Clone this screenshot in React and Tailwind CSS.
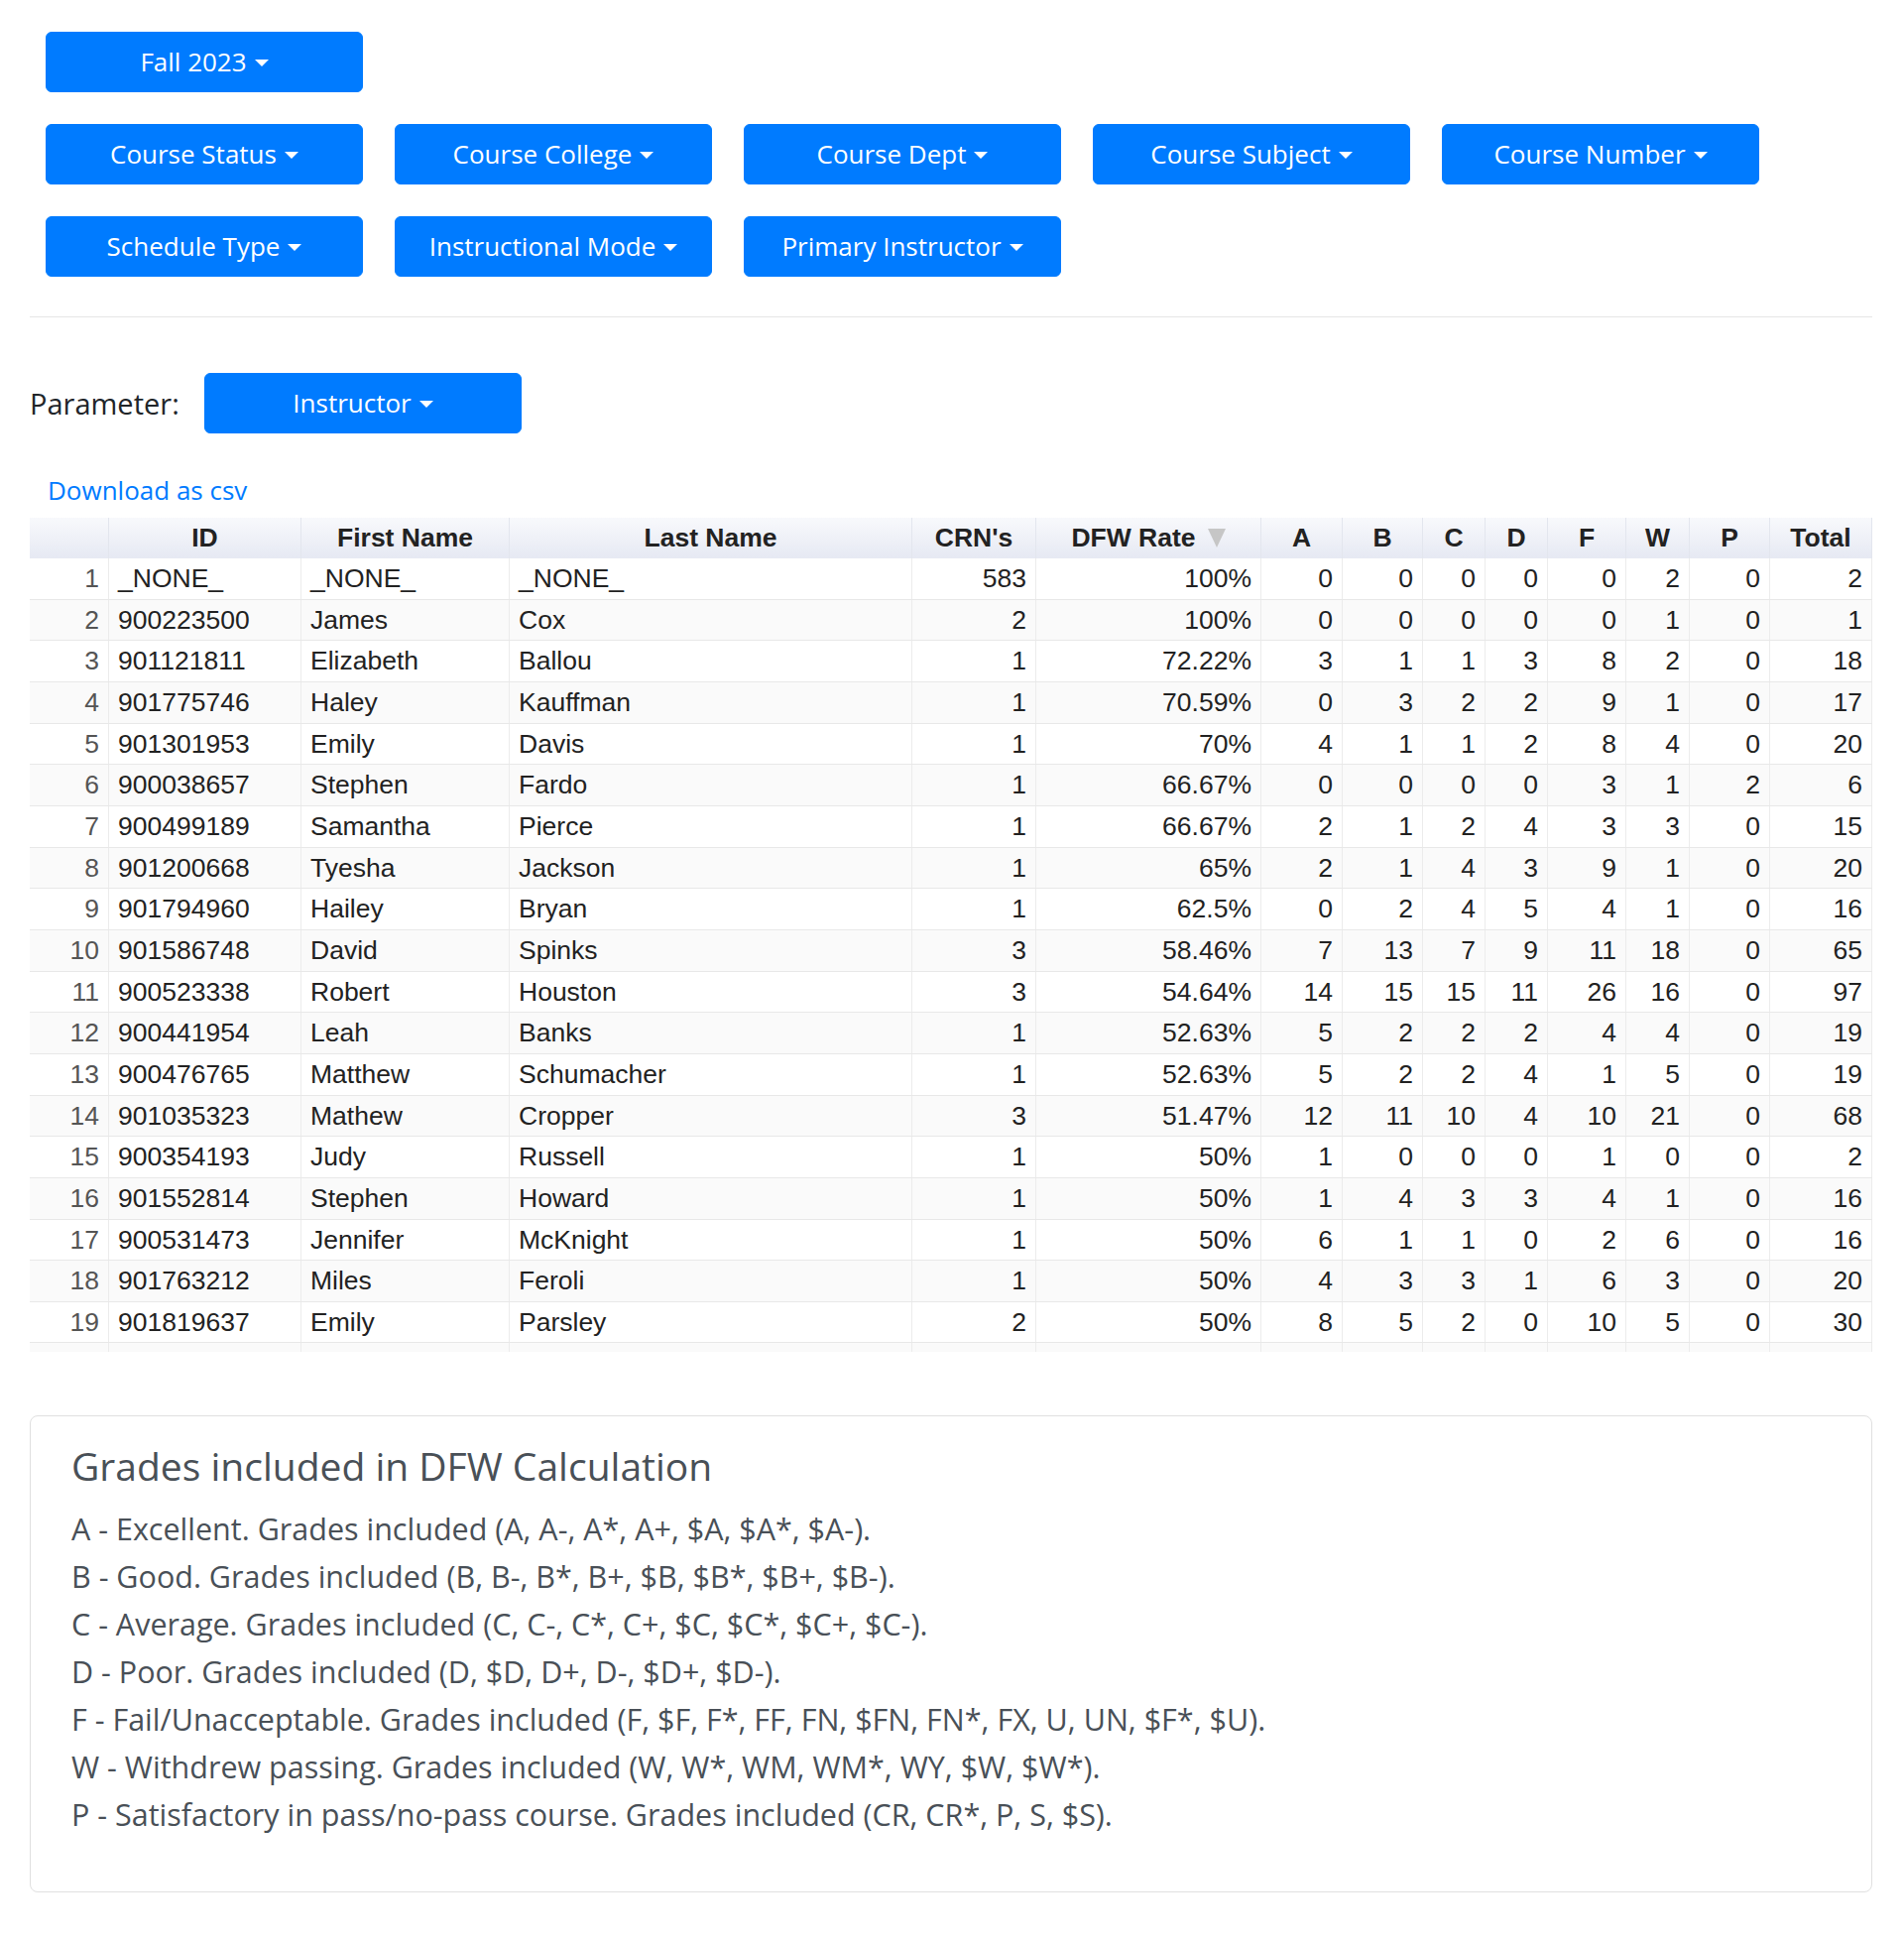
import React from 'react';

const cols = [
  { key: 'n', label: '', w: 'w-[80px]', align: 'right' },
  { key: 'id', label: 'ID', w: 'w-[194px]', align: 'left' },
  { key: 'first', label: 'First Name', w: 'w-[210px]', align: 'left' },
  { key: 'last', label: 'Last Name', w: 'w-[406px]', align: 'left' },
  { key: 'crn', label: "CRN's", w: 'w-[125px]', align: 'right' },
  { key: 'dfw', label: 'DFW Rate', w: 'w-[227px]', align: 'right', sorted: true },
  { key: 'a', label: 'A', w: 'w-[82px]', align: 'right' },
  { key: 'b', label: 'B', w: 'w-[81px]', align: 'right' },
  { key: 'c', label: 'C', w: 'w-[63px]', align: 'right' },
  { key: 'd', label: 'D', w: 'w-[63px]', align: 'right' },
  { key: 'f', label: 'F', w: 'w-[79px]', align: 'right' },
  { key: 'wd', label: 'W', w: 'w-[64px]', align: 'right' },
  { key: 'p', label: 'P', w: 'w-[81px]', align: 'right' },
  { key: 'total', label: 'Total', w: 'w-[103px]', align: 'right' },
];

const rows = [
  ['_NONE_', '_NONE_', '_NONE_', 583, '100%', 0, 0, 0, 0, 0, 2, 0, 2],
  ['900223500', 'James', 'Cox', 2, '100%', 0, 0, 0, 0, 0, 1, 0, 1],
  ['901121811', 'Elizabeth', 'Ballou', 1, '72.22%', 3, 1, 1, 3, 8, 2, 0, 18],
  ['901775746', 'Haley', 'Kauffman', 1, '70.59%', 0, 3, 2, 2, 9, 1, 0, 17],
  ['901301953', 'Emily', 'Davis', 1, '70%', 4, 1, 1, 2, 8, 4, 0, 20],
  ['900038657', 'Stephen', 'Fardo', 1, '66.67%', 0, 0, 0, 0, 3, 1, 2, 6],
  ['900499189', 'Samantha', 'Pierce', 1, '66.67%', 2, 1, 2, 4, 3, 3, 0, 15],
  ['901200668', 'Tyesha', 'Jackson', 1, '65%', 2, 1, 4, 3, 9, 1, 0, 20],
  ['901794960', 'Hailey', 'Bryan', 1, '62.5%', 0, 2, 4, 5, 4, 1, 0, 16],
  ['901586748', 'David', 'Spinks', 3, '58.46%', 7, 13, 7, 9, 11, 18, 0, 65],
  ['900523338', 'Robert', 'Houston', 3, '54.64%', 14, 15, 15, 11, 26, 16, 0, 97],
  ['900441954', 'Leah', 'Banks', 1, '52.63%', 5, 2, 2, 2, 4, 4, 0, 19],
  ['900476765', 'Matthew', 'Schumacher', 1, '52.63%', 5, 2, 2, 4, 1, 5, 0, 19],
  ['901035323', 'Mathew', 'Cropper', 3, '51.47%', 12, 11, 10, 4, 10, 21, 0, 68],
  ['900354193', 'Judy', 'Russell', 1, '50%', 1, 0, 0, 0, 1, 0, 0, 2],
  ['901552814', 'Stephen', 'Howard', 1, '50%', 1, 4, 3, 3, 4, 1, 0, 16],
  ['900531473', 'Jennifer', 'McKnight', 1, '50%', 6, 1, 1, 0, 2, 6, 0, 16],
  ['901763212', 'Miles', 'Feroli', 1, '50%', 4, 3, 3, 1, 6, 3, 0, 20],
  ['901819637', 'Emily', 'Parsley', 2, '50%', 8, 5, 2, 0, 10, 5, 0, 30],
];

const grades = [
  'A - Excellent. Grades included (A, A-, A*, A+, $A, $A*, $A-).',
  'B - Good. Grades included (B, B-, B*, B+, $B, $B*, $B+, $B-).',
  'C - Average. Grades included (C, C-, C*, C+, $C, $C*, $C+, $C-).',
  'D - Poor. Grades included (D, $D, D+, D-, $D+, $D-).',
  'F - Fail/Unacceptable. Grades included (F, $F, F*, FF, FN, $FN, FN*, FX, U, UN, $F*, $U).',
  'W - Withdrew passing. Grades included (W, W*, WM, WM*, WY, $W, $W*).',
  'P - Satisfactory in pass/no-pass course. Grades included (CR, CR*, P, S, $S).',
];

function DropBtn({ label }) {
  return (
    <button className="flex h-[61px] w-[320px] items-center justify-center rounded-[6px] border border-[#007bff] bg-[#007bff] text-[26px] leading-[41px] text-white">
      <span>{label}</span>
      <span className="ml-[8px] mt-[2px] inline-block h-0 w-0 border-x-[7.5px] border-t-[7.5px] border-x-transparent border-t-white" />
    </button>
  );
}

function Row({ cells, index }) {
  const even = index % 2 === 1;
  return (
    <div className={`flex h-[41.67px] border-b border-[#e8e8e8] ${even ? 'bg-[#fafafa]' : 'bg-white'}`}>
      {cols.map((c, i) => (
        <div
          key={c.key}
          className={`${c.w} shrink-0 overflow-hidden whitespace-nowrap border-r border-[#ececec] px-[9px] leading-[40px] ${
            c.align === 'right' ? 'text-right' : 'text-left'
          } ${i === 0 ? 'text-[#555]' : 'text-[#222]'}`}
        >
          {cells ? (i === 0 ? index + 1 : cells[i - 1]) : ''}
        </div>
      ))}
    </div>
  );
}

export default function App() {
  return (
    <div className="min-h-[1958px] bg-white pl-[30px] pr-[32px] pt-[32px] font-['Open_Sans',sans-serif] text-[#212529]">
      {/* filter dropdowns */}
      <div className="pl-[16px]">
        <div className="flex gap-[32px]">
          <DropBtn label="Fall 2023" />
        </div>
        <div className="mt-[32px] flex gap-[32px]">
          <DropBtn label="Course Status" />
          <DropBtn label="Course College" />
          <DropBtn label="Course Dept" />
          <DropBtn label="Course Subject" />
          <DropBtn label="Course Number" />
        </div>
        <div className="mt-[32px] flex gap-[32px]">
          <DropBtn label="Schedule Type" />
          <DropBtn label="Instructional Mode" />
          <DropBtn label="Primary Instructor" />
        </div>
      </div>

      <div className="mt-[40px] h-px bg-[#e5e5e5]" />

      <div className="mt-[56px] flex items-center">
        <span className="w-[176px] text-[29px]">Parameter:</span>
        <DropBtn label="Instructor" />
      </div>

      <div className="mt-[38px] pl-[18px]">
        <a className="text-[26px] leading-[38px] text-[#007bff]">Download as csv</a>
      </div>

      {/* results grid */}
      <div className="mt-[9px] h-[841px] overflow-hidden font-['Liberation_Sans',Arial,sans-serif] text-[26.5px]">
        <div className="flex h-[41px] bg-gradient-to-b from-[#f8f9fc] to-[#e6e9f3] font-bold text-[#222]">
          {cols.map((c) => (
            <div
              key={c.key}
              className={`${c.w} flex shrink-0 items-center justify-center border-r border-[#e3e6ee] leading-[41px]`}
            >
              {c.label}
              {c.sorted && (
                <svg className="ml-[12px]" width="18" height="19" viewBox="0 0 18 19">
                  <path d="M0 0 H18 L9 19 Z" fill="#c6c6c6" />
                </svg>
              )}
            </div>
          ))}
        </div>
        {rows.map((r, i) => (
          <Row key={i} cells={r} index={i} />
        ))}
        <Row cells={null} index={19} />
      </div>

      {/* grade legend */}
      <div className="mt-[64px] h-[481px] rounded-[8px] border border-[#e0e0e0] px-[41px] pt-[26px] text-[#495057]">
        <h3 className="text-[39px] font-medium leading-[48px]">Grades included in DFW Calculation</h3>
        <div className="mt-[15px] text-[30.5px] leading-[48px]">
          {grades.map((g) => (
            <p key={g}>{g}</p>
          ))}
        </div>
      </div>
    </div>
  );
}
